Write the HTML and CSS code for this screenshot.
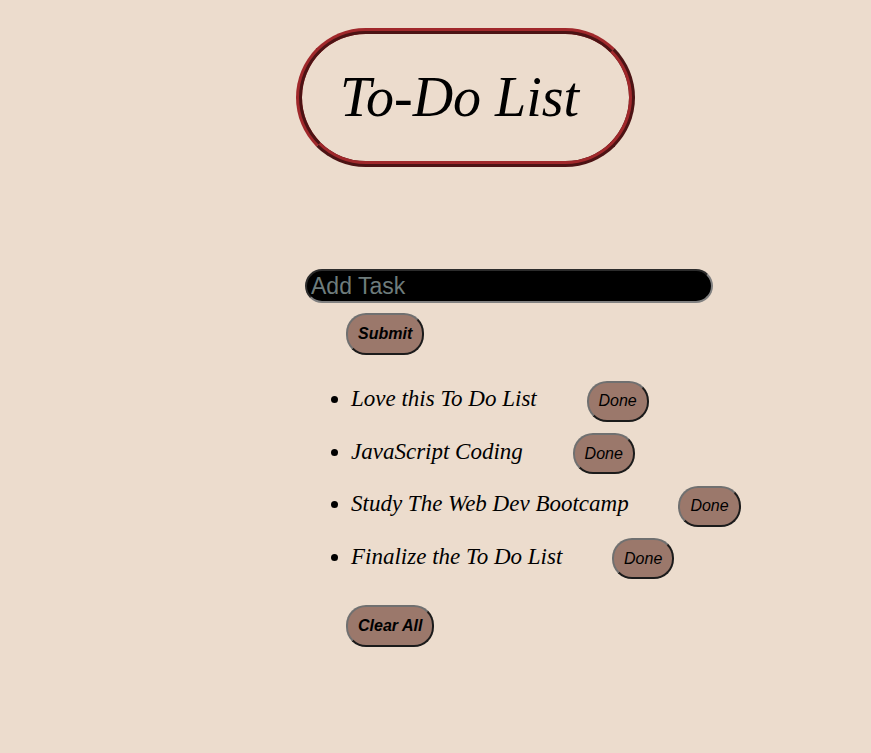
FILE: index.html
```html
<!DOCTYPE html>
<html>
<head>
<meta charset="utf-8">
<title>To-Do List</title>
<link rel="stylesheet" href="styles.css">
</head>
<body>
<main class="page">
  <h1 class="title">To-Do List</h1>
  <form class="add-form">
    <input class="task-input" type="text" placeholder="Add Task">
    <button class="btn btn-strong submit" type="button">Submit</button>
  </form>
  <ul class="tasks">
    <li class="task">Love this To Do List <button class="btn done" type="button">Done</button></li>
    <li class="task">JavaScript Coding <button class="btn done" type="button">Done</button></li>
    <li class="task">Study The Web Dev Bootcamp <button class="btn done" type="button">Done</button></li>
    <li class="task">Finalize the To Do List <button class="btn done" type="button">Done</button></li>
  </ul>
  <button class="btn btn-strong clear" type="button">Clear All</button>
</main>
</body>
</html>
```
FILE: styles.css
```css
html, body {
  margin: 0;
  padding: 0;
  background: #ecdccd;
}
body {
  font-family: "Liberation Serif", serif;
  min-height: 753px;
}
.page {
  padding-left: 296px;
  padding-top: 28px;
}
.title {
  display: inline-block;
  margin: 0;
  border: 6px ridge #a0282b;
  border-radius: 70px;
  padding: 32px 50px 33px 38px;
  font-size: 56px;
  font-style: italic;
  font-weight: normal;
  line-height: 62px;
  color: #000;
}
.add-form {
  margin: 102px 0 0 9px;
  display: flex;
  flex-direction: column;
  align-items: flex-start;
}
.task-input {
  box-sizing: border-box;
  width: 408px;
  height: 34px;
  margin: 0;
  padding: 0 4px;
  background: #000;
  border: 2px inset #808080;
  border-radius: 17px;
  font-family: "Liberation Sans", Arial, sans-serif;
  font-size: 23px;
  color: #ddd;
  outline: none;
}
.task-input::placeholder {
  color: #6e7c7c;
}
.btn {
  box-sizing: border-box;
  height: 41px;
  padding: 0 10px;
  background: #9b786b;
  border: 2px outset #707070;
  border-radius: 20px;
  font-family: "Liberation Sans", Arial, sans-serif;
  font-size: 16px;
  font-style: italic;
  color: #000;
  line-height: 18px;
}
.btn-strong {
  font-weight: bold;
  height: 42px;
}
.submit {
  margin: 10px 0 0 41px;
}
.tasks {
  margin: 24px 0 0 0;
  padding-left: 55px;
  font-size: 23px;
  font-style: italic;
}
.task {
  line-height: 40px;
  margin-bottom: 10px;
}
.done {
  margin-left: 44px;
  vertical-align: baseline;
}
.clear {
  margin: 16px 0 0 50px;
}
```
